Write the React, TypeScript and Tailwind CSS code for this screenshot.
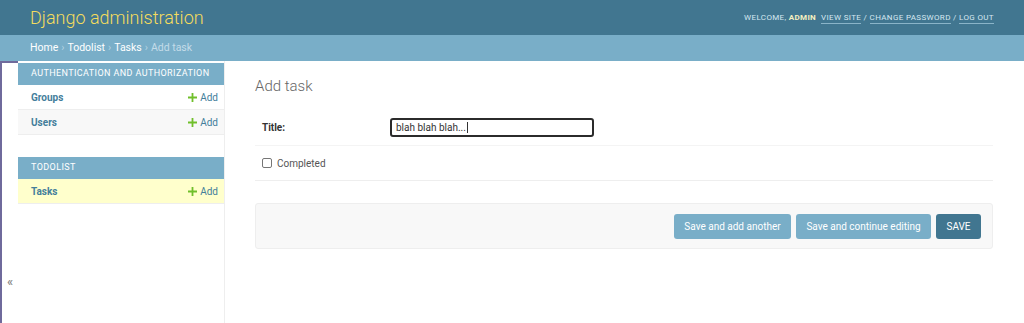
import React from "react";

const font = { fontFamily: "Roboto, 'Liberation Sans', Arial, sans-serif" };

function AddLink() {
  return (
    <span className="flex items-center gap-[3px] text-[10px] text-[#447e9b]">
      <svg width="9" height="9" viewBox="0 0 10 10">
        <path d="M4 0h2v4h4v2H6v4H4V6H0V4h4z" fill="#70bf2b" />
      </svg>
      Add
    </span>
  );
}

function Row({ name, bg }: { name: string; bg: string }) {
  return (
    <div className={`flex h-[25px] items-center justify-between border-b border-[#eeeeee] pl-[13px] pr-[6px] ${bg}`}>
      <span className="text-[10px] font-bold text-[#447e9b]">{name}</span>
      <AddLink />
    </div>
  );
}

function Caption({ text }: { text: string }) {
  return (
    <div className="flex h-[22px] items-center bg-[#79aec8] pl-[13px] text-[9px] tracking-[0.4px] text-white">
      {text}
    </div>
  );
}

export default function App() {
  return (
    <div style={font} className="flex h-[323px] w-[1024px] flex-col overflow-hidden bg-white">
      <div className="flex h-[35px] shrink-0 items-center justify-between bg-[#417690] pl-[30px] pr-[30px]">
        <span className="text-[18px] font-light text-[#f5dd5d]">Django administration</span>
        <div className="flex items-center text-[8px] tracking-[0.35px] text-[#d6e8f0]">
          <span>WELCOME,&nbsp;</span>
          <span className="mr-[5px] font-bold text-[#f5f0c0]">ADMIN</span>
          <span className="border-b border-[#8ab4c8] leading-[11px]">VIEW SITE</span>
          <span>&nbsp;/&nbsp;</span>
          <span className="border-b border-[#8ab4c8] leading-[11px]">CHANGE PASSWORD</span>
          <span>&nbsp;/&nbsp;</span>
          <span className="border-b border-[#8ab4c8] leading-[11px]">LOG OUT</span>
        </div>
      </div>
      <div className="flex h-[26px] shrink-0 items-center bg-[#79aec8] pl-[30px] text-[10.5px] text-white">
        <span>Home</span>
        <span className="mx-[3px] text-[#b5d4e3]">›</span>
        <span>Todolist</span>
        <span className="mx-[3px] text-[#b5d4e3]">›</span>
        <span>Tasks</span>
        <span className="mx-[3px] text-[#b5d4e3]">›</span>
        <span className="text-[#c4dce8]">Add task</span>
      </div>
      <div className="flex min-h-0 flex-1">
        <div className="flex w-[18px] shrink-0 items-end justify-center border-l-2 border-t-2 border-[#6f6a9c] pb-[35px]">
          <span className="text-[13px] leading-none text-[#7a7a7a]">«</span>
        </div>
        <div className="w-[207px] shrink-0 border-r border-[#eeeeee] pt-[2px]">
          <Caption text="AUTHENTICATION AND AUTHORIZATION" />
          <Row name="Groups" bg="bg-white" />
          <Row name="Users" bg="bg-[#f8f8f8]" />
          <div className="h-[22px]" />
          <Caption text="TODOLIST" />
          <Row name="Tasks" bg="bg-[#ffffcc]" />
        </div>
        <div className="flex-1 pl-[30px] pr-[31px] pt-[16px]">
          <h1 className="text-[15px] font-light leading-[18px] text-[#666666]">Add task</h1>
          <div className="mt-[14px]">
            <div className="flex h-[37px] items-center border-b border-[#f4f4f4] pl-[7px]">
              <span className="w-[128px] text-[10px] font-bold text-[#333333]">Title:</span>
              <div className="flex h-[19px] w-[204px] items-center rounded-[3px] border-2 border-[#2b2b2b] pl-[4px] text-[10px] text-[#333333]">
                blah blah blah...<span className="ml-[1px] inline-block h-[11px] w-px bg-[#333]" />
              </div>
            </div>
            <div className="flex h-[35px] items-center border-b border-[#eeeeee] pl-[7px]">
              <span className="inline-block h-[10px] w-[10px] rounded-[2px] border border-[#767676] bg-white" />
              <span className="ml-[5px] text-[10px] text-[#555555]">Completed</span>
            </div>
          </div>
          <div className="mt-[22px] flex h-[46px] items-center justify-end gap-[5px] rounded-[3px] border border-[#eeeeee] bg-[#f8f8f8] pr-[11px]">
            <div className="flex h-[25px] w-[117px] items-center justify-center rounded-[3px] bg-[#79aec8] text-[10px] text-white">
              Save and add another
            </div>
            <div className="flex h-[25px] w-[135px] items-center justify-center rounded-[3px] bg-[#79aec8] text-[10px] text-white">
              Save and continue editing
            </div>
            <div className="flex h-[25px] w-[45px] items-center justify-center rounded-[3px] bg-[#417690] text-[10px] text-white">
              SAVE
            </div>
          </div>
        </div>
      </div>
    </div>
  );
}
